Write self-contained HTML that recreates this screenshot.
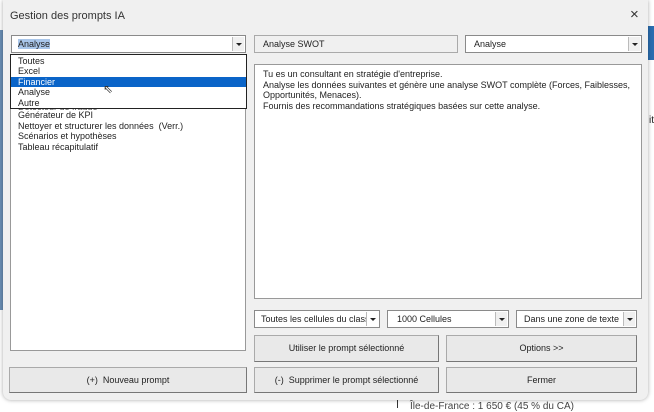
<!DOCTYPE html>
<html><head><meta charset="utf-8"><style>
*{box-sizing:border-box;margin:0;padding:0}
body{width:654px;height:408px;background:#fff;position:relative;overflow:hidden;font-family:"Liberation Sans",sans-serif;font-size:9px;color:#222}
.a{position:absolute}
.dlg{left:3px;top:0;width:645px;height:400px;background:#f0f0f0;border-radius:0 0 8px 8px;box-shadow:0 0 4px rgba(0,0,0,.35)}
.box{position:absolute;background:#fff;border:1px solid #8a8a8a}
.arr{position:absolute;right:1px;top:1px;bottom:1px;width:12px;background:#f0f0f0;border-left:1px solid #bbb}
.arr:after{content:"";position:absolute;left:3px;top:6px;border-left:3px solid transparent;border-right:3px solid transparent;border-top:3px solid #222}
.btn{position:absolute;background:#e9e9e9;border:1px solid #aaa;border-right-color:#777;border-bottom-color:#777;text-align:center;font-size:9px;color:#222}
.t{position:absolute;white-space:nowrap}
</style></head><body>
<div class="a" style="left:648px;top:26px;width:6px;height:34px;background:#2a6db0"></div>
<div class="a" style="left:0;top:30px;width:3px;height:280px;background:#6a8fb5"></div>
<div class="a" style="left:397px;top:398px;width:1px;height:10px;background:#333"></div>
<div class="t" style="left:410px;top:401px;font-size:10px;color:#444">Île-de-France : 1 650 € (45 % du CA)</div>
<div class="t" style="left:649px;top:115px;font-size:10px">it</div>
<div class="a dlg"></div>
<div class="t" style="left:10px;top:10px;font-size:11px;color:#333">Gestion des prompts IA</div>
<div class="t" style="left:630px;top:6px;font-size:15px;color:#333">×</div>

<div class="box" style="left:11px;top:35px;width:235px;height:18px"><span class="t" style="left:6px;top:3px;background:#a9c6ea">Analyse</span><div class="arr"></div></div>
<div class="box" style="left:10px;top:54px;width:236px;height:297px;border-color:#999"></div>
<div class="t" style="left:18px;top:102px;color:#555">Détecteur de fraude</div>
<div class="t" style="left:18px;top:110px;line-height:10.5px;font-size:9px">Générateur de KPI<br>Nettoyer et structurer les données&nbsp; (Verr.)<br>Scénarios et hypothèses<br>Tableau récapitulatif</div>
<div class="box" style="left:10px;top:54px;width:237px;height:55px;border-color:#222;line-height:10.4px;padding-top:1px">
<div style="padding-left:7px">Toutes</div><div style="padding-left:7px">Excel</div>
<div style="padding-left:7px;background:#0a64c8;color:#fff">Financier</div>
<div style="padding-left:7px">Analyse</div><div style="padding-left:7px">Autre</div></div>
<div class="t" style="left:103px;top:82px;font-size:12px;color:#333">⇖</div>

<div class="a" style="left:254px;top:35px;width:204px;height:18px;background:#f0f0f0;border:1px solid #aaa"><span class="t" style="left:8px;top:3px">Analyse SWOT</span></div>
<div class="box" style="left:465px;top:35px;width:177px;height:18px"><span class="t" style="left:8px;top:3px">Analyse</span><div class="arr"></div></div>
<div class="box" style="left:254px;top:64px;width:388px;height:235px;border-color:#999"><div class="t" style="left:8px;top:4px;line-height:10.5px">Tu es un consultant en stratégie d'entreprise.<br>Analyse les données suivantes et génère une analyse SWOT complète (Forces, Faiblesses,<br>Opportunités, Menaces).<br>Fournis des recommandations stratégiques basées sur cette analyse.</div></div>

<div class="box" style="left:254px;top:310px;width:126px;height:18px;overflow:hidden"><span class="t" style="left:6px;top:3px">Toutes les cellules du classe</span><div class="arr" style="background:#fff"></div></div>
<div class="box" style="left:387px;top:310px;width:122px;height:18px"><span class="t" style="left:9px;top:3px">1000 Cellules</span><div class="arr"></div></div>
<div class="box" style="left:516px;top:310px;width:121px;height:18px"><span class="t" style="left:7px;top:3px">Dans une zone de texte</span><div class="arr"></div></div>

<div class="btn" style="left:254px;top:335px;width:185px;height:27px;line-height:25px">Utiliser le prompt sélectionné</div>
<div class="btn" style="left:446px;top:335px;width:191px;height:27px;line-height:25px">Options &gt;&gt;</div>
<div class="btn" style="left:9px;top:367px;width:238px;height:26px;line-height:24px">(+)&nbsp; Nouveau prompt</div>
<div class="btn" style="left:254px;top:367px;width:185px;height:26px;line-height:24px">(-)&nbsp; Supprimer le prompt sélectionné</div>
<div class="btn" style="left:446px;top:367px;width:191px;height:26px;line-height:24px">Fermer</div>
</body></html>
